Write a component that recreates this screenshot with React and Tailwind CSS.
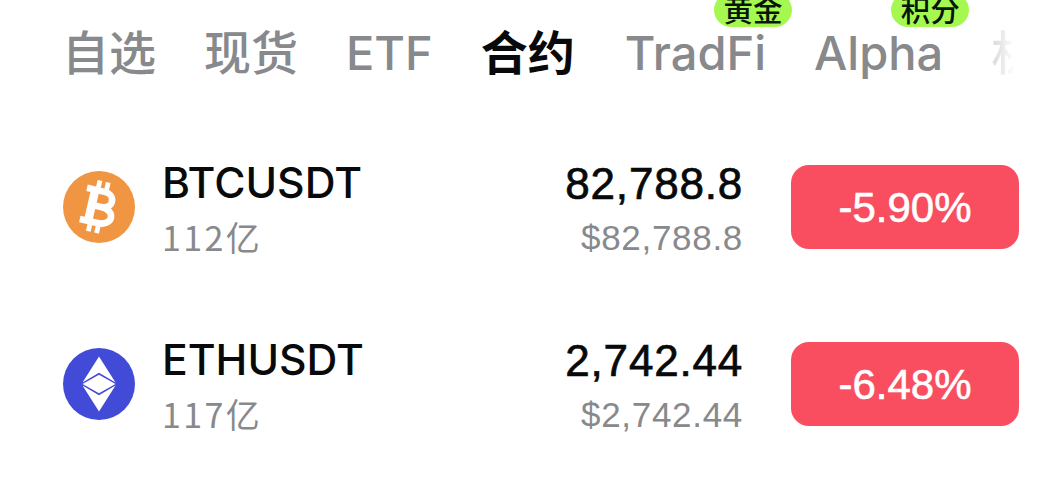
import React from 'react';

const tabs = [
  { name: '自选' },
  { name: '现货' },
  { name: 'ETF' },
  { name: '合约', active: true },
  { name: 'TradFi', badge: '黄金' },
  { name: 'Alpha', badge: '积分' },
  { name: '机', faded: true },
];

const coins = [
  { symbol: 'BTCUSDT', volume: '112亿', price: '82,788.8', usd: '$82,788.8', change: '-5.90%', icon: BtcIcon },
  { symbol: 'ETHUSDT', volume: '117亿', price: '2,742.44', usd: '$2,742.44', change: '-6.48%', icon: EthIcon },
];

function BtcIcon() {
  return (
    <svg viewBox="0 0 72 72" className="w-[72px] h-[72px] shrink-0">
      <circle cx="36" cy="36" r="36" fill="#f09642" />
      <g transform="rotate(13 36 36)" fill="none" stroke="#fff">
        <path d="M20 20H38C50.5 20 50.5 35.5 38 35.5H28M38 35.5C54 35.5 54 52 38 52H20" strokeWidth="6.6" />
        <path d="M28.5 20V52" strokeWidth="8.5" />
        <path d="M31 10V20M39.5 10V20M31 52V62M39.5 52V62" strokeWidth="4.8" />
      </g>
    </svg>
  );
}

function EthIcon() {
  return (
    <svg viewBox="0 0 72 72" className="w-[72px] h-[72px] shrink-0">
      <circle cx="36" cy="36" r="36" fill="#414bd8" />
      <g fill="#fff">
        <path d="M36 8.5L52.5 34.5L36 24.7L19.5 34.5Z" />
        <path d="M36 26.7L52.5 36L36 45.3L19.5 36Z" />
        <path d="M36 47.3L52.5 37.5L36 63.5L19.5 37.5Z" />
      </g>
    </svg>
  );
}

const App = () => {
  return (
    <div className="w-[1049px] h-[502px] bg-white overflow-hidden font-['Inter','Noto_Sans_CJK_SC',sans-serif]">
      {/* Market tabs */}
      <div className="flex gap-12 pl-[62px] pt-[19px] h-[118px] text-[47px] leading-[68px] font-medium text-[#87898c] whitespace-nowrap">
        {tabs.map((tab) => (
          <div
            key={tab.name}
            className={`relative shrink-0 ${tab.active ? 'text-[#08090a] font-bold mr-[2px]' : ''} ${tab.faded ? 'text-transparent bg-clip-text bg-linear-to-r from-[#dedee0] from-10% to-white to-50%' : ''}`}
          >
            {tab.name}
            {tab.badge && (
              <span className="absolute -right-[26px] -top-[26px] w-[78px] h-[34px] rounded-full bg-[#a5f84f] text-center text-[29.5px] leading-[35px] font-medium text-[#08150a]">
                {tab.badge}
              </span>
            )}
          </div>
        ))}
      </div>

      {/* Coin rows */}
      {coins.map(({ symbol, volume, price, usd, change, icon: Icon }) => (
        <div key={symbol} className="flex items-center h-[177px] pl-[63px] pr-[30px]">
          <Icon />
          <div className="ml-[27px] pt-[7px] flex-1">
            <div className="text-[42.7px] leading-[54px] font-medium text-[#08090a]">{symbol}</div>
            <div className="text-[34px] leading-[54px] tracking-[2.4px] text-[#87898c] font-['Noto_Sans_CJK_SC',sans-serif] font-normal">{volume}</div>
          </div>
          <div className="pt-[8px] text-right font-['Liberation_Sans',sans-serif]">
            <div className="text-[44px] leading-[54px] tracking-[0.8px] text-[#08090a] [-webkit-text-stroke:0.7px_#08090a]">{price}</div>
            <div className="text-[35px] leading-[54px] tracking-[0.7px] text-[#87898c]">{usd}</div>
          </div>
          <div className="ml-[48px] w-[228px] h-[84px] rounded-[18px] bg-[#f84e60] text-white text-center text-[42px] leading-[86px] font-['Liberation_Sans',sans-serif] [-webkit-text-stroke:0.6px_#fff]">
            {change}
          </div>
        </div>
      ))}
    </div>
  );
};

export default App;
